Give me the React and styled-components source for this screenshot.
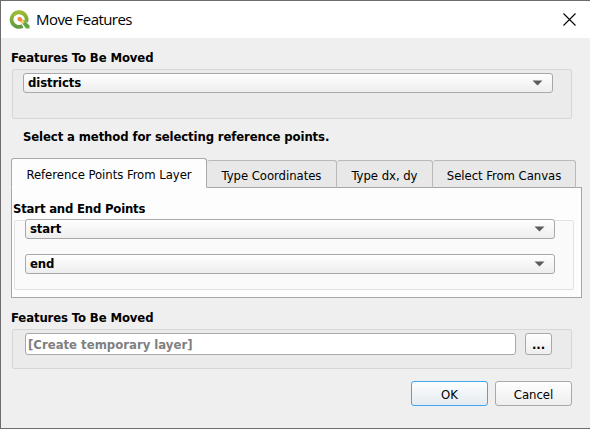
import React from "react";
import styled, { createGlobalStyle } from "styled-components";

const GlobalStyle = createGlobalStyle`
  *, *::before, *::after { box-sizing: border-box; }
  body { margin: 0; overflow: hidden; }
  button, input { font: inherit; color: inherit; margin: 0; padding: 0; }
`;

const Dialog = styled.div`
  display: flex;
  flex-direction: column;
  width: 590px;
  height: 429px;
  border: 1px solid #6d6b6d;
  border-right: 0;
  background: #efefef;
  color: #000;
  font: 13px/16px "DejaVu Sans Condensed", "DejaVu Sans", sans-serif;
`;

const TitleBar = styled.header`
  display: flex;
  align-items: center;
  flex: none;
  height: 37px;
  padding: 0 14px 0 8px;
  background: #fff;
`;

const Title = styled.h1`
  flex: 1;
  margin: 0 0 2px 6px;
  font: 400 15px/20px "Open Sans", "Noto Sans", sans-serif;
  letter-spacing: -0.55px;
`;

const CloseButton = styled.button`
  display: flex;
  border: 0;
  background: none;
`;

const Content = styled.main`
  display: flex;
  flex-direction: column;
  padding: 12px 8px 0 10px;
`;

const Label = styled.span`
  display: block;
  white-space: nowrap;
  font-weight: ${(p) => (p.$bold ? 700 : 400)};
  letter-spacing: ${(p) => p.$track ?? (p.$bold ? -0.12 : -0.05)}px;
`;

const Section = styled.section`
  display: flex;
  flex-direction: column;
  margin-top: ${(p) => p.$top || 0}px;
`;

const GroupFrame = styled.div`
  display: flex;
  flex-direction: ${(p) => (p.$row ? "row" : "column")};
  align-items: flex-start;
  gap: ${(p) => p.$gap || 0}px;
  width: 560px;
  height: ${(p) => p.$height}px;
  margin: 3px 0 0 1px;
  padding: ${(p) => p.$padding};
  border: 1px solid ${(p) => (p.$light ? "#e2e2e2" : "#d6d6d6")};
  border-radius: 2px;
  background: ${(p) => (p.$light ? "#fafafa" : "#ebebeb")};
`;

const Select = styled.div`
  display: flex;
  align-items: center;
  justify-content: space-between;
  flex: none;
  width: 530px;
  height: 20px;
  margin-top: ${(p) => (p.$raised ? -2 : 0)}px;
  padding: 0 9px 0 4px;
  border: 1px solid #a8a8a8;
  border-radius: 3px;
  background: linear-gradient(#fefefe, #eeeeee);
`;

const Instruction = styled.div`
  margin: 10px 0 13px 12px;
`;

const TabList = styled.div`
  display: flex;
  align-items: flex-end;
  height: 30px;
  margin-bottom: -1px;
`;

const Tab = styled.div`
  display: flex;
  justify-content: center;
  position: relative;
  width: ${(p) => p.$width}px;
  height: ${(p) => (p.$active ? 30 : 28)}px;
  padding-top: ${(p) => (p.$active ? 8 : 7)}px;
  border: 1px solid ${(p) => (p.$active ? "#a9a9a9" : "#b9b9b9")};
  border-left-width: ${(p) => (p.$active ? 1 : 0)}px;
  border-bottom-color: ${(p) => (p.$active ? "#fdfdfd" : "#a6a6a6")};
  border-radius: 3px 3px 0 0;
  background: ${(p) => (p.$active ? "#fdfdfd" : "#e8e8e8")};
`;

const TabPanel = styled.div`
  width: 571px;
  height: 111px;
  padding: 13px 1px 0;
  border: 1px solid #a6a6a6;
  background: #fdfdfd;
`;

const LayerInput = styled.input`
  width: 491px;
  height: 22px;
  padding: 0 2px 0 2px;
  border: 1px solid #a8a8a8;
  border-radius: 3px;
  background: #fff;
  outline: none;
  font-weight: 700;
  letter-spacing: 0;
  &::placeholder { color: #808080; opacity: 1; }
`;

const Button = styled.button`
  display: flex;
  align-items: center;
  justify-content: center;
  width: ${(p) => (p.$small ? 27 : 77)}px;
  height: ${(p) => (p.$small ? 22 : 25)}px;
  padding-top: 2px;
  border: 1px solid ${(p) => (p.$primary ? "#3fa6f0" : "#a9a9a9")};
  border-radius: 3px;
  background: ${(p) => (p.$primary ? "linear-gradient(#fdfefe, #e4ebf0)" : "linear-gradient(#fefefe, #eeeeee)")};
`;

const Actions = styled.footer`
  display: flex;
  justify-content: flex-end;
  gap: 7px;
  margin: 12px 10px 0 0;
`;

function QgisLogo() {
  return (
    <svg width="21" height="21" viewBox="0 0 21 21">
      <defs>
        <linearGradient id="ring" x1="0" y1="0" x2="0" y2="1">
          <stop offset="0" stopColor="#9dbb35" />
          <stop offset="1" stopColor="#5f9c40" />
        </linearGradient>
      </defs>
      <path d="M13.6 17A7.5 7.3 0 1 1 17.2 12.8" fill="none" stroke="url(#ring)" strokeWidth="3.8" />
      <path d="M12.2 13.3l2.7-2.2 5.6 5.4v2.9h-3.3z" fill="#66a544" />
      <path d="M12.6 9.9l3.2 3-2 2-3.4-3z" fill="#f3cf62" />
      <path d="M8.6 8.2l3.2-.1 1.8 2.4-1.9 2.3-3.1-1.4z" fill="#ee8a45" />
    </svg>
  );
}

function Dropdown({ text, raised }) {
  return (
    <Select $raised={raised}>
      <Label $bold>{text}</Label>
      <svg width="11" height="6" viewBox="0 0 11 6">
        <path d="M.5.5h10L5.5 5.5z" fill="#5c5c5c" />
      </svg>
    </Select>
  );
}

export default function App() {
  return (
    <>
      <GlobalStyle />
      <Dialog>
        <TitleBar>
          <QgisLogo />
          <Title>Move Features</Title>
          <CloseButton aria-label="Close">
            <svg width="13" height="13" viewBox="0 0 13 13">
              <path d="M.5.5l12 12M12.5.5l-12 12" stroke="#000" strokeWidth="1.1" />
            </svg>
          </CloseButton>
        </TitleBar>
        <Content>
          <Section>
            <Label $bold>Features To Be Moved</Label>
            <GroupFrame $height={50} $padding="3px 0 0 10px">
              <Dropdown text="districts" />
            </GroupFrame>
          </Section>
          <Instruction>
            <Label $bold>Select a method for selecting reference points.</Label>
          </Instruction>
          <TabList>
            <Tab $active $width={196}><Label>Reference Points From Layer</Label></Tab>
            <Tab $width={130}><Label>Type Coordinates</Label></Tab>
            <Tab $width={96}><Label>Type dx, dy</Label></Tab>
            <Tab $width={143}><Label>Select From Canvas</Label></Tab>
          </TabList>
          <TabPanel>
            <Label $bold $track={-0.2}>Start and End Points</Label>
            <GroupFrame $light $height={70} $gap={15} $padding="0 0 0 10px">
              <Dropdown raised text="start" />
              <Dropdown text="end" />
            </GroupFrame>
          </TabPanel>
          <Section $top={12}>
            <Label $bold>Features To Be Moved</Label>
            <GroupFrame $row $height={40} $gap={9} $padding="3px 0 0 12px">
              <LayerInput placeholder="[Create temporary layer]" />
              <Button $small><Label $bold>...</Label></Button>
            </GroupFrame>
          </Section>
          <Actions>
            <Button $primary><Label>OK</Label></Button>
            <Button><Label>Cancel</Label></Button>
          </Actions>
        </Content>
      </Dialog>
    </>
  );
}
